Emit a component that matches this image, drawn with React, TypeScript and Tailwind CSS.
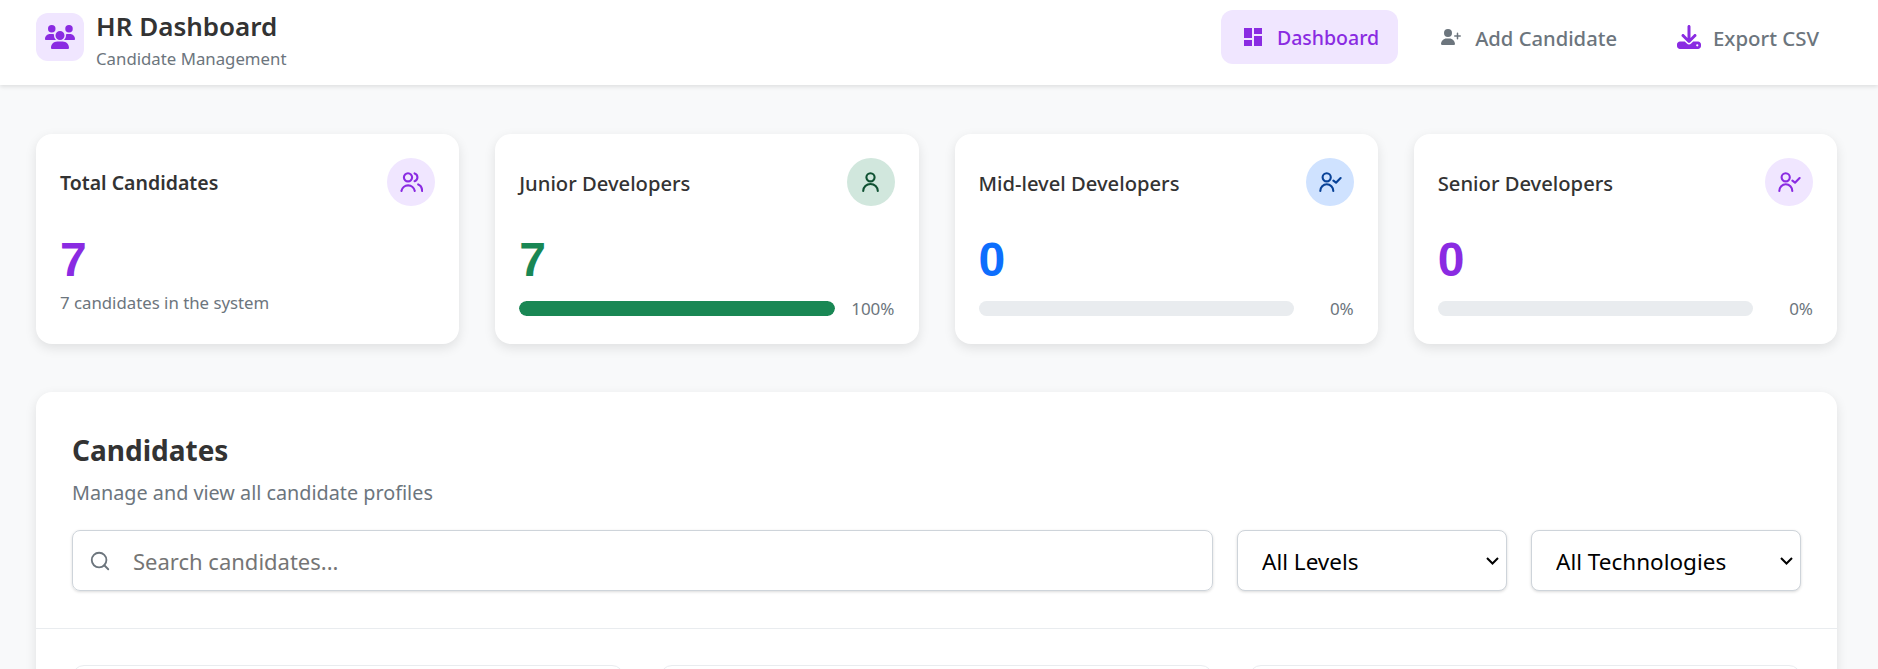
import type { ComponentType } from "react";
import { Search } from "lucide-react";
import { FaDownload, FaUserPlus, FaUsers } from "react-icons/fa6";
import { MdDashboard } from "react-icons/md";

const IconFrame = ({ d }: Readonly<{ d: string }>) => (
  <svg viewBox="0 0 24 24" className="size-6" fill="none" stroke="currentColor" strokeWidth="2.1" strokeLinecap="round" strokeLinejoin="round">
    <path d={d} />
  </svg>
);

const PeopleIcon = () => (
  <IconFrame d="M4.9 7.3a4.1 4.1 0 1 0 8.2 0a4.1 4.1 0 1 0-8.2 0M2.4 21a6.8 6.8 0 0 1 13.4 0M15.6 3.4a4.1 4.1 0 0 1 0 7.8M19.2 14.4c2.6 1 3.9 3.7 3.9 6.6" />
);

const PersonIcon = () => (
  <IconFrame d="M7.4 7.3a4.1 4.1 0 1 0 8.2 0a4.1 4.1 0 1 0-8.2 0M4.2 21a7.3 7 0 0 1 14.6 0" />
);

const PersonCheckIcon = () => (
  <IconFrame d="M4.6 7.3a4.1 4.1 0 1 0 8.2 0a4.1 4.1 0 1 0-8.2 0M2.3 21a6.5 6.8 0 0 1 13 0M15.4 10.7l2.6 2l4.6-4.7" />
);

type Stat = {
  title: string;
  value: number;
  pct: number;
  valueClass: string;
  circleClass: string;
  icon: ComponentType;
};

const stats: Stat[] = [
  {
    title: "Junior Developers",
    value: 7,
    pct: 100,
    valueClass: "text-[#198754]",
    circleClass: "bg-[#d1e7dd] text-[#0f5132]",
    icon: PersonIcon,
  },
  {
    title: "Mid-level Developers",
    value: 0,
    pct: 0,
    valueClass: "text-[#0d6efd]",
    circleClass: "bg-[#cfe2ff] text-[#084298]",
    icon: PersonCheckIcon,
  },
  {
    title: "Senior Developers",
    value: 0,
    pct: 0,
    valueClass: "text-[#8a2be2]",
    circleClass: "bg-[#f0e6ff] text-[#8a2be2]",
    icon: PersonCheckIcon,
  },
];

const StatCard = ({ stat }: Readonly<{ stat: Stat }>) => {
  const Glyph = stat.icon;

  return (
    <div className="h-[210px] rounded-2xl bg-white px-6 pt-6 shadow-[0_4px_12px_rgba(0,0,0,0.1)]">
      <div className="flex items-center justify-between">
        <h3 className="mt-[2px] text-[20.2px] font-medium text-[#333333]">{stat.title}</h3>
        <div className={`flex size-12 items-center justify-center rounded-full ${stat.circleClass}`}>
          <Glyph />
        </div>
      </div>
      <div className={`mt-[26px] font-['Liberation_Sans'] text-[48px] leading-[56px] font-bold ${stat.valueClass}`}>
        {stat.value}
      </div>
      <div className="mt-2 flex items-center">
        <div className="h-[15px] flex-1 overflow-hidden rounded-full bg-[#e9ecef]">
          <div className="h-full rounded-full bg-[#198754]" style={{ width: `${stat.pct}%` }} />
        </div>
        <span className="w-[60px] text-right text-[17px] text-[#6c757d]">{stat.pct}%</span>
      </div>
    </div>
  );
};

const FilterSelect = ({ label }: Readonly<{ label: string }>) => (
  <div className="relative w-[270px]">
    <select className="h-[61px] w-full appearance-none rounded-lg border border-[#ced4da] bg-white pt-[3px] pl-6 text-[22.5px] text-black shadow-[0_1px_3px_rgba(0,0,0,0.15)]">
      <option>{label}</option>
    </select>
    <svg
      viewBox="0 0 13 8"
      className="pointer-events-none absolute top-1/2 right-2 h-2 w-[13px] -translate-y-1/2"
      fill="none"
      stroke="black"
      strokeWidth="2"
    >
      <path d="M1 1l5.5 5.5L12 1" />
    </svg>
  </div>
);

export default function App() {
  return (
    <div className="h-[669px] overflow-hidden bg-[#f8f9fa] font-['Noto_Sans',sans-serif]">
      <header className="flex h-[85px] items-center justify-between bg-white pr-[39px] pb-[11px] pl-9 shadow-[0_2px_4px_rgba(0,0,0,0.1)]">
        <div className="flex items-center gap-3">
          <div className="flex size-12 items-center justify-center rounded-xl bg-[#f0e6ff] text-[#8a2be2]">
            <FaUsers className="size-[30px]" />
          </div>
          <div className="mt-[6px]">
            <h1 className="text-[26px] leading-[34px] font-semibold text-[#333333]">HR Dashboard</h1>
            <p className="mt-[3px] text-[16.8px] leading-[26px] text-[#6c757d]">Candidate Management</p>
          </div>
        </div>
        <nav className="flex items-center gap-5 text-[#6c757d]">
          <a className="mr-[3px] flex h-[54px] items-center gap-3 rounded-xl bg-[#f0e6ff] pr-[19px] pl-5 text-[19.5px] font-medium text-[#8a2be2]">
            <MdDashboard className="size-6" />
            <span className="mt-[2px]">Dashboard</span>
          </a>
          <a className="flex h-[54px] items-center gap-[14px] px-5 text-[20.2px] font-medium">
            <FaUserPlus className="size-5" />
            <span className="mt-[2px]">Add Candidate</span>
          </a>
          <a className="flex h-[54px] items-center gap-3 px-5 text-[20.4px] font-medium">
            <FaDownload className="size-6 text-[#8a2be2]" />
            <span className="mt-[2px]">Export CSV</span>
          </a>
        </nav>
      </header>

      <main className="pt-[49px] pr-[41px] pl-9">
        <div className="grid grid-cols-4 gap-9">
          <div className="h-[210px] rounded-2xl bg-white px-6 pt-6 shadow-[0_4px_12px_rgba(0,0,0,0.1)]">
            <div className="flex items-center justify-between">
              <h3 className="mt-[2px] text-[19.5px] font-semibold text-[#333333]">Total Candidates</h3>
              <div className="flex size-12 items-center justify-center rounded-full bg-[#f0e6ff] text-[#8a2be2]">
                <PeopleIcon />
              </div>
            </div>
            <div className="mt-[26px] font-['Liberation_Sans'] text-[48px] leading-[56px] font-bold text-[#8a2be2]">7</div>
            <p className="mt-[3px] text-[16.8px] leading-6 text-[#6c757d]">7 candidates in the system</p>
          </div>
          {stats.map((stat) => (
            <StatCard key={stat.title} stat={stat} />
          ))}
        </div>

        <section className="mt-12 rounded-2xl bg-white shadow-[0_4px_12px_rgba(0,0,0,0.1)]">
          <div className="border-b border-[#e9ecef] px-9 pt-10 pb-[37px]">
            <h2 className="text-[28px] leading-[36px] font-bold text-[#333333]">Candidates</h2>
            <p className="mt-[10px] text-[19.8px] leading-[30px] text-[#6c757d]">Manage and view all candidate profiles</p>
            <div className="mt-[22px] flex gap-6">
              <div className="flex h-[61px] flex-1 items-center gap-[22px] rounded-lg border border-[#ced4da] pl-4 shadow-[0_1px_3px_rgba(0,0,0,0.15)]">
                <Search className="size-[22px] text-[#6c757d]" strokeWidth={2} />
                <input
                  type="text"
                  placeholder="Search candidates..."
                  className="flex-1 bg-transparent pt-[2px] text-[22px] outline-none placeholder:text-[#757575]"
                />
              </div>
              <FilterSelect label="All Levels" />
              <FilterSelect label="All Technologies" />
            </div>
          </div>
          <div className="grid grid-cols-3 gap-9 px-9 pt-9">
            <div className="h-[240px] rounded-xl border border-[#e9ecef]" />
            <div className="h-[240px] rounded-xl border border-[#e9ecef]" />
            <div className="h-[240px] rounded-xl border border-[#e9ecef]" />
          </div>
        </section>
      </main>
    </div>
  );
}
